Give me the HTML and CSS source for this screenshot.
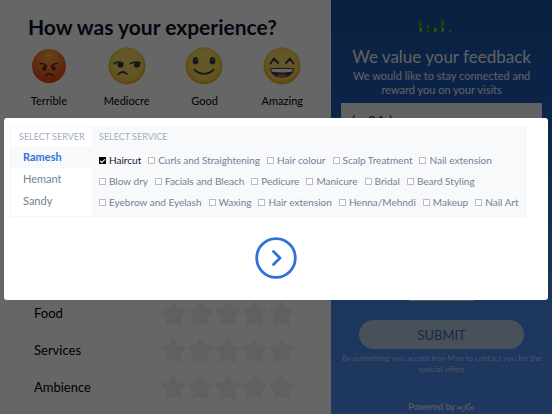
FILE: index.html
```html
<!DOCTYPE html>
<html lang="en">
<head>
<meta charset="utf-8">
<title>Feedback</title>
<link rel="stylesheet" href="styles.css">
</head>
<body>
<svg class="defs" aria-hidden="true">
  <defs>
    <radialGradient id="yellow" cx="50%" cy="45%" r="52%"><stop offset="0.6" stop-color="#f8da66"/><stop offset="1" stop-color="#f5cf48"/></radialGradient>
    <radialGradient id="red" cx="50%" cy="22%" r="78%"><stop offset="0" stop-color="#f8ac48"/><stop offset="0.55" stop-color="#ee6f30"/><stop offset="1" stop-color="#dc3f10"/></radialGradient>
    <symbol id="star" viewBox="0 0 24 24"><path d="M12 2 15.2 8 22.2 9.3 17.6 14.4 18.4 21.8 12 18.8 5.6 21.8 6.4 14.4 1.8 9.3 8.8 8Z" fill="#ebeff4" stroke="#ebeff4" stroke-width="3" stroke-linejoin="round"/></symbol>
  </defs>
</svg>
<div class="page">
  <main class="survey">
    <h1>How was your experience?</h1>
    <div class="moods">
      <button class="mood" type="button">
        <svg viewBox="0 0 38 38"><circle cx="19" cy="19" r="17" fill="url(#red)"/><g fill="none" stroke="#672913" stroke-width="1.7" stroke-linecap="round"><path d="M10.5 16.5Q15 16.5 16.6 19.5M27.5 16.5Q23 16.5 21.4 19.5M15.5 28.5Q19 24.5 22.5 28.5"/></g><ellipse cx="14.3" cy="21.3" rx="1.9" ry="2.6" fill="#672913"/><ellipse cx="23.7" cy="21.3" rx="1.9" ry="2.6" fill="#672913"/></svg>
        <span>Terrible</span>
      </button>
      <button class="mood" type="button">
        <svg viewBox="0 0 38 38"><circle cx="19" cy="19" r="18.5" fill="#e8b62d"/><circle cx="19" cy="17.8" r="17" fill="url(#yellow)"/><g fill="none" stroke="#343c46" stroke-width="1.7" stroke-linecap="round"><path d="M6 16.5Q10 13.8 15 16.5M22.5 16.5Q28 13.8 32 16M10 27.5Q14.5 22.8 19 27"/></g><ellipse cx="12.5" cy="18" rx="3" ry="2.8" fill="#343c46"/><ellipse cx="29" cy="18" rx="3" ry="2.8" fill="#343c46"/></svg>
        <span>Mediocre</span>
      </button>
      <button class="mood" type="button">
        <svg viewBox="0 0 38 38"><circle cx="19" cy="19" r="18.5" fill="#e8b62d"/><circle cx="19" cy="17.8" r="17" fill="url(#yellow)"/><ellipse cx="10.5" cy="13.8" rx="2.8" ry="3.8" fill="#343c46"/><ellipse cx="27.5" cy="13.8" rx="2.8" ry="3.8" fill="#343c46"/><circle cx="11" cy="12.5" r=".8" fill="#aab"/><circle cx="28" cy="12.5" r=".8" fill="#aab"/><path d="M9.5 22.8Q19 31 28.5 22.8" fill="none" stroke="#343c46" stroke-width="1.8" stroke-linecap="round"/></svg>
        <span>Good</span>
      </button>
      <button class="mood" type="button">
        <svg viewBox="0 0 38 38"><circle cx="19" cy="19" r="18.5" fill="#e8b62d"/><circle cx="19" cy="17.8" r="17" fill="url(#yellow)"/><path d="M7.5 16.5 11 11.5 15 16M23 16 27 11.5 30.5 16.5" fill="none" stroke="#343c46" stroke-width="1.9" stroke-linecap="round" stroke-linejoin="round"/><path d="M6.5 21.5Q19 20 31.5 21.5Q29.5 30.5 19 30.5T6.5 21.5Z" fill="#343c46"/><path d="M7.8 22.3Q19 21 30.2 22.3L29 24.8Q19 26.2 9 24.8Z" fill="#fff"/><path d="M13 29.2Q19 24.5 25 29.2Q19 31.5 13 29.2Z" fill="#e84850"/></svg>
        <span>Amazing</span>
      </button>
    </div>
    <div class="ratings">
      <div class="rating"><span>Food</span><div class="stars"><svg><use href="#star"/></svg><svg><use href="#star"/></svg><svg><use href="#star"/></svg><svg><use href="#star"/></svg><svg><use href="#star"/></svg></div></div>
      <div class="rating"><span>Services</span><div class="stars"><svg><use href="#star"/></svg><svg><use href="#star"/></svg><svg><use href="#star"/></svg><svg><use href="#star"/></svg><svg><use href="#star"/></svg></div></div>
      <div class="rating"><span>Ambience</span><div class="stars"><svg><use href="#star"/></svg><svg><use href="#star"/></svg><svg><use href="#star"/></svg><svg><use href="#star"/></svg><svg><use href="#star"/></svg></div></div>
    </div>
  </main>
  <aside class="contact">
    <svg class="brand" viewBox="0 0 34 14"><g fill="#36a32c"><path d="M0 2h3v11H0zM8 6h3v7H8zM15 8h3v5h-3zM22 0h3v13h-3zM30 11h3v2h-3z"/></g><path d="M1 9h2v3H1zM15 10h2v2h-2zM23 9h2v3h-2z" fill="#b5bd70"/><path d="M9 9h3v3H9z" fill="#6b3a26"/></svg>
    <h2>We value your feedback</h2>
    <p class="lead">We would like to stay connected and reward you on your visits</p>
    <input class="phone" type="tel" value="( +91 )" aria-label="Phone number">
    <div class="field-end"></div>
    <button class="submit" type="button">SUBMIT</button>
    <p class="terms">By submitting you accept Iron Man to contact you for the special offers</p>
    <p class="powered">Powered by
      <svg viewBox="0 0 18 9" role="img" aria-label="Logo"><g fill="none" stroke="#fff" stroke-linecap="round"><path d="M.7 6V3.6L2.3 6V3.6M3.5 5H5Q5 4 4.2 4T3.5 5.2 5 6M13 3.5V6M14 5H15.5Q15.5 4 14.7 4T14 5.2 15.5 6M16.8 3.5V6" stroke-width=".6"/><path d="M6 3.2Q8 3 9 5T12 7M6 8Q8 7 9 5T13 1" stroke-width=".9"/></g><circle cx="9" cy="2" r=".8" fill="#fff"/><circle cx="12" cy="1" r=".8" fill="#fff"/></svg>
    </p>
  </aside>
</div>
<div class="overlay">
  <section class="modal" role="dialog" aria-label="Select service">
    <div class="panel">
      <div class="servers">
        <h3>SELECT SERVER</h3>
        <button class="server selected" type="button">Ramesh</button>
        <button class="server" type="button">Hemant</button>
        <button class="server" type="button">Sandy</button>
      </div>
      <div class="services">
        <h3>SELECT SERVICE</h3>
        <div class="options">
          <label><input type="checkbox" checked>Haircut</label>
          <label><input type="checkbox">Curls and Straightening</label>
          <label><input type="checkbox">Hair colour</label>
          <label><input type="checkbox">Scalp Treatment</label>
          <label><input type="checkbox">Nail extension</label>
          <label><input type="checkbox">Blow dry</label>
          <label><input type="checkbox">Facials and Bleach</label>
          <label><input type="checkbox">Pedicure</label>
          <label><input type="checkbox">Manicure</label>
          <label><input type="checkbox">Bridal</label>
          <label><input type="checkbox">Beard Styling</label>
          <label><input type="checkbox">Eyebrow and Eyelash</label>
          <label><input type="checkbox">Waxing</label>
          <label><input type="checkbox">Hair extension</label>
          <label><input type="checkbox">Henna/Mehndi</label>
          <label><input type="checkbox">Makeup</label>
          <label><input type="checkbox">Nail Art</label>
        </div>
      </div>
    </div>
    <button class="next" type="button" aria-label="Next"><svg viewBox="0 0 42 42"><circle cx="21" cy="21" r="19.3" fill="none" stroke="#2f70d9" stroke-width="2.8"/><path d="M18.5 14.5 25 21 18.5 27.5" fill="none" stroke="#2f70d9" stroke-width="2.8" stroke-linecap="round" stroke-linejoin="round"/></svg></button>
  </section>
</div>
</body>
</html>
```

FILE: styles.css
```css
* { box-sizing: border-box; }
body, h1, h2, h3, p { margin: 0; }
body { font-family: Lato, "Open Sans", sans-serif; color: #000; overflow: hidden; }
button { font: inherit; color: inherit; background: none; border: 0; padding: 0; }
.defs { position: absolute; width: 0; height: 0; }
.page { display: grid; grid-template-columns: 3fr 2fr; height: 100vh; overflow: hidden; }
.survey { display: flex; flex-direction: column; background: #fff; padding: 14px 0; }
h1 { font-size: 21px; line-height: 26px; font-weight: 700; color: #0a0f2c; padding-left: 28px; white-space: nowrap; }
.moods { display: grid; grid-template-columns: repeat(4, 1fr); padding: 7px 10px 0; }
.mood { display: flex; flex-direction: column; align-items: center; gap: 8px; font-size: 11px; line-height: 16px; }
.mood svg { width: 38px; height: 38px; }
.ratings { display: flex; flex-direction: column; gap: 12px; margin-top: auto; padding: 0 37px 0 34px; }
.rating { display: flex; align-items: center; justify-content: space-between; font-size: 13px; line-height: 25px; height: 25px; }
.stars { display: flex; gap: 2px; }
.stars svg { width: 25px; height: 25px; }
.contact { display: flex; flex-direction: column; align-items: center; padding: 19px 10px 0; color: #f0f2f6; text-align: center; background: linear-gradient(#1b529f, #1d5ab5 25%, #4587e6 72%, #4d8cf0); }
.brand { width: 34px; height: 14px; margin-left: -12px; }
h2 { font-size: 17px; line-height: 24px; font-weight: 400; margin-top: 12px; white-space: nowrap; }
.lead { font-size: 11px; line-height: 14px; padding: 0 8px; }
.phone { width: 100%; height: 36px; margin-top: 6px; padding: 0 10px; border: 0; background: #f0f2f8; color: #333; font: 15px/20px Lato, sans-serif; }
.field-end { width: 65px; height: 36px; margin-top: 126px; background: #f1ecd2; }
.submit { width: 82%; height: 29px; flex: none; margin-top: 19px; border-radius: 16px; background: #b4c8e0; color: #3a66a8; font-size: 13px; }
.terms { font-size: 8px; line-height: 11px; margin-top: 4px; color: #b8d2fa; }
.powered { display: flex; align-items: center; gap: 2px; margin: auto 0 1px; font-size: 9px; line-height: 12px; }
.powered svg { width: 18px; height: 9px; }
.overlay { position: fixed; inset: 0; display: flex; align-items: center; padding: 4px 4px 0; background: rgba(0, 0, 0, .6); }
.modal { flex: 1; display: flex; flex-direction: column; align-items: center; gap: 20px; padding: 8px 6px 21px; background: #fff; border-radius: 3px; }
.panel { align-self: stretch; display: flex; margin-right: 16px; border: 1px solid #f4f6f9; }
.servers { flex: none; width: 81px; }
h3 { font-size: 9px; line-height: 19px; font-weight: 400; color: #a0aec0; white-space: nowrap; }
.servers h3 { padding-left: 8px; }
.server { display: block; width: 100%; height: 22px; padding: 0 0 2px 12px; text-align: left; font-size: 11px; color: #718096; }
.server.selected { background: #f8f9fb; color: #3274dc; font-weight: 700; }
.services { flex: 1; background: #f8f9fb; padding: 0 0 6px 7px; }
.options { display: flex; flex-wrap: wrap; column-gap: 7px; row-gap: 5px; padding-top: 6px; }
label { display: flex; align-items: center; gap: 3px; font-size: 10px; line-height: 16px; color: #718096; white-space: nowrap; }
label:has(:checked) { color: #10172d; }
label input { appearance: none; display: grid; place-items: center; width: 7px; height: 7px; margin: 0; border: 1px solid #b9bec6; background: #fff; }
label input:checked { border-color: #000; background: #000; }
label input:checked::after { content: ""; width: 4px; height: 2px; border: solid #fff; border-width: 0 0 1px 1px; transform: rotate(-45deg); }
.next svg { display: block; width: 42px; height: 42px; }
```
